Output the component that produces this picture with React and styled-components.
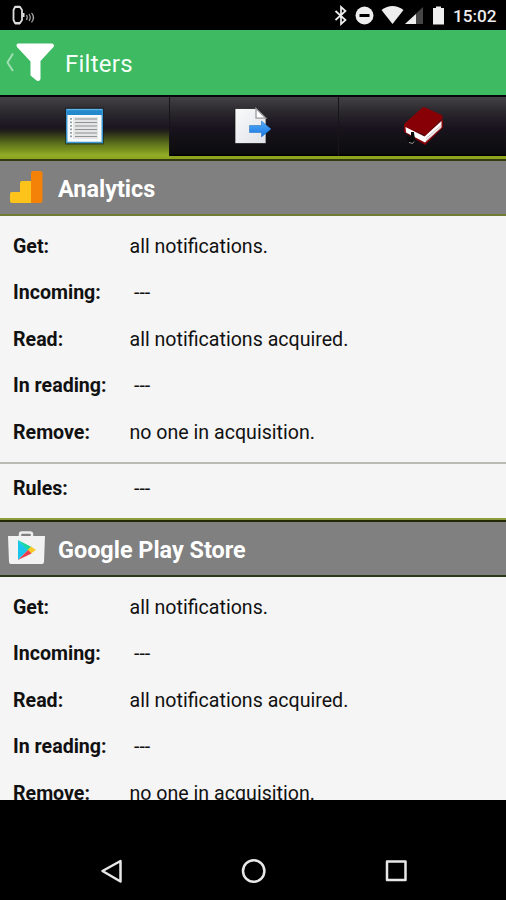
import React from 'react';
import styled, { createGlobalStyle } from 'styled-components';

const GlobalStyle = createGlobalStyle`
  * { box-sizing: border-box; }
  body { margin: 0; background: #000; font-family: Roboto, "Noto Sans", sans-serif; }
  svg { display: block; flex: none; }
`;

const Screen = styled.div`
  width: 506px;
  height: 900px;
  display: flex;
  flex-direction: column;
  overflow: hidden;
  background: #000;
`;

const StatusBar = styled.header`
  height: 30px;
  flex: none;
  display: flex;
  justify-content: space-between;
  color: #eee;
`;

const StatusRight = styled.div`
  display: flex;
  padding-right: 9px;
`;

const Clock = styled.span`
  width: 44px;
  font-size: 17.2px;
  font-weight: 500;
  line-height: 32px;
  white-space: nowrap;
`;

const TitleBar = styled.div`
  height: 65px;
  flex: none;
  display: flex;
  align-items: center;
  background: #3dba62;
  color: #f4fff7;
`;

const Title = styled.h1`
  margin: 0;
  padding-top: 3px;
  font-size: 24px;
  font-weight: 400;
  line-height: 28px;
  letter-spacing: 0.25px;
`;

const Tabs = styled.nav`
  height: 66px;
  flex: none;
  display: grid;
  grid-template-columns: 169px 169px 168px;
  padding-top: 2px;
  border-bottom: 2px solid #343c10;
  background: linear-gradient(#05070a 2px, transparent 2px), #8da51f;
`;

const Tab = styled.button`
  height: ${(p) => (p.$active ? 62 : 59)}px;
  padding: 0;
  border: 0;
  border-left: ${(p) => (p.$active ? 0 : 1)}px solid #17141a;
  display: flex;
  justify-content: center;
  background: ${(p) =>
    p.$active
      ? 'linear-gradient(#454247 0%, #2b282e 25%, #1b151f 50%, #232417 56%, #5c701b 75%, #91ad24 94%, #8ba322 100%)'
      : 'linear-gradient(#434145 0%, #29262c 27%, #19131d 52%, #121014 75%, #0c0b0d 97%, #000 98%)'};
`;

const Content = styled.main`
  height: 639px;
  flex: none;
  overflow: hidden;
  background: #f5f5f5;
  color: #111;
`;

const SectionHeader = styled.div`
  height: ${(p) => (p.$first ? 55 : 57)}px;
  display: flex;
  align-items: center;
  background: #808080;
  border-top: ${(p) => (p.$first ? 0 : 2)}px solid #202804;
  border-bottom: 2px solid ${(p) => (p.$first ? '#6f7d34' : '#29391c')};
`;

const SectionTitle = styled.h2`
  margin: 0;
  padding-top: 3px;
  font-size: 23.4px;
  line-height: 30px;
  font-weight: 700;
  color: #fff;
`;

const Fields = styled.dl`
  margin: 0;
  padding: 7.4px 0 6.6px;
  border-bottom: 2px solid #b9bab2;
`;

const Rules = styled.dl`
  margin: 0;
  height: 56px;
  padding-top: 1px;
  border-bottom: 2px solid #8d9b3f;
`;

const Field = styled.div`
  height: 46.4px;
  display: grid;
  grid-template-columns: 116.5px 1fr;
  align-items: center;
  padding-left: 13px;
  font-size: 19.6px;
  line-height: 24px;
`;

const Label = styled.dt`
  padding-top: 1px;
  font-weight: 700;
`;

const Value = styled.dd`
  margin: 0;
  padding-top: 1px;
  padding-left: ${(p) => (p.$empty ? 4.5 : 0)}px;
`;

const NavBar = styled.nav`
  height: 100px;
  flex: none;
  display: flex;
  justify-content: space-between;
  padding: 56px 98px 0 99px;
`;

const NavButton = styled.button`
  padding: 0;
  border: 0;
  background: transparent;
  height: 30px;
`;

const WatchIcon = () => (
  <svg width="40" height="30" viewBox="0 0 40 30" fill="none" stroke="#ddd">
    <path d="M15 7h5l2 3v10l-2 3h-5l-1.500-3V10z" strokeWidth="1.8" />
    <path d="M15 6.700h5M15 23.700h5" strokeWidth="1.8" />
    <path d="M23.500 13v4" strokeWidth="2" />
    <path d="M26.500 15q1.500 2 0 5M29 14q2.500 3.500 0 7M31.500 12.800q4 4.500 0 9.500" stroke="#aaa" strokeWidth="1.2" />
  </svg>
);

const StatusIcons = () => (
  <svg width="123" height="30" viewBox="330 0 123 30" fill="#eee">
    <path d="M335.5 11l10 9-4.5 4V7l4.5 4-10 9" fill="none" stroke="#eee" strokeWidth="1.7" />
    <circle cx="364.5" cy="15.5" r="9" />
    <path d="M359.5 14h10v3h-10z" fill="#000" />
    <path d="M381.5 10q11-8 22 0l-11 14z" />
    <path d="M423 7v17h-18z" fill="#454545" />
    <path d="M416 14v10h-11z" />
    <path d="M433 8h3V6.500h5V8h3v16.500h-11z" />
  </svg>
);

const FilterIcon = () => (
  <svg width="65" height="65" viewBox="0 30 65 65">
    <path d="M13 53.500L7.500 62.500 13 71" fill="none" stroke="#a0dfb1" strokeWidth="2" />
    <path d="M18 43.500h34q3 1 1.500 3.500L40.500 61v18q-1 3-4 1.500l-6-5V61.500L17 47q-1.500-2.500 1-3.500z" fill="#fff" />
  </svg>
);

const ListIcon = () => (
  <svg width="170" height="59" viewBox="0 97 170 59">
    <rect x="65" y="107.500" width="39" height="37" rx="1" fill="#111" opacity=".5" />
    <rect x="66.700" y="109.500" width="35.600" height="33" fill="#f8fafb" stroke="#3795cf" strokeWidth="1.500" />
    <path d="M67 110h35v5H67z" fill="#2489cc" />
    <path d="M67 109.700h35" stroke="#65bce9" />
    <path d="M73 117h25v22H73z" fill="#e4e5e5" />
    <path d="M75 119h22M75 122.500h22M75 126h22M75 129.500h22M75 133h22M75 136.500h22" stroke="#909294" strokeWidth="1.200" />
    <path d="M71 118v21" stroke="#8e999d" strokeWidth="1.800" strokeDasharray="1.800 1.700" />
  </svg>
);

const ExportIcon = () => (
  <svg width="168" height="59" viewBox="170.500 97 168 59">
    <defs>
      <linearGradient id="page" x2="1" y2="1">
        <stop stopColor="#fafafa" />
        <stop offset="1" stopColor="#dfe2e8" />
      </linearGradient>
      <linearGradient id="arrow" x2="0" y2="1">
        <stop stopColor="#55acf4" />
        <stop offset="1" stopColor="#1575e5" />
      </linearGradient>
    </defs>
    <path d="M235.500 108.500H257l9.500 10v25h-31z" fill="url(#page)" stroke="#111" strokeWidth=".7" />
    <path d="M256.500 108.500v9.700h9.800z" fill="#fff" stroke="#999" strokeWidth="1.300" />
    <path d="M250 125.500h12V121l9.500 8-9.500 8v-4.500h-12z" fill="url(#arrow)" stroke="#1869bd" strokeWidth=".5" />
  </svg>
);

const BookIcon = () => (
  <svg width="167" height="59" viewBox="339 97 167 59">
    <path d="M404 124l20 12 19-17v8.500L425 145l-21-13z" fill="#850007" />
    <path d="M405.500 127l19 9.500 17-15.500v6.500L425 142.500l-19-10z" fill="#fff" />
    <path d="M426 138.500l15-13M426 141l15-13.500" stroke="#b5a5a5" strokeWidth=".8" />
    <path d="M422.500 107.500q1.500-.6 4 .5l16 7.500v3L425 135.500l-20.500-10v-2z" fill="#870006" />
    <path d="M412 133v6l-4-1 3 5 3-4-1-6z" fill="#080808" stroke="#080808" strokeWidth="2" />
    <path d="M409 142.500l3.500 1 1.500-2" fill="none" stroke="#999" strokeWidth="1" />
  </svg>
);

const AnalyticsIcon = () => (
  <svg width="58" height="53" viewBox="0 161 58 53">
    <path d="M12 192h8v-9q0-2 2-2h9v22H12q-2 0-2-2v-7q0-2 2-2z" fill="#fdc31a" />
    <path d="M33 171h7q2.500 0 2.500 2.500v27q0 2.500-2.500 2.500h-9v-30q0-2 2-2z" fill="#f58208" />
  </svg>
);

const PlayIcon = () => (
  <svg width="58" height="53" viewBox="0 522 58 53">
    <path d="M20 536v-1.500q0-2 2-2h8q2 0 2 2v1.500" fill="none" stroke="#eee" strokeWidth="2.500" />
    <path d="M8 536h37l-1 26q0 2-2 2H11q-2 0-2-2z" fill="#f2f2f2" />
    <path d="M18 540v20l10-10z" fill="#18c6ed" />
    <path d="M18 540l13.500 7-3.500 3.500z" fill="#16d69d" />
    <path d="M31 546.500l5 3.500-5 3.500-3.500-3.500z" fill="#fac927" />
    <path d="M18 560l10-10 3.500 3.500z" fill="#e83d4c" />
  </svg>
);

const ICONS = { analytics: AnalyticsIcon, play: PlayIcon };
const EMPTY = '---';

const fields = [
  ['Get:', 'all notifications.'],
  ['Incoming:', EMPTY],
  ['Read:', 'all notifications acquired.'],
  ['In reading:', EMPTY],
  ['Remove:', 'no one in acquisition.'],
];

function FieldRow({ label, value }) {
  return (
    <Field>
      <Label>{label}</Label>
      <Value $empty={value === EMPTY}>{value}</Value>
    </Field>
  );
}

function FilterSection({ icon, title, first, rules }) {
  const Icon = ICONS[icon];
  return (
    <section>
      <SectionHeader $first={first}>
        <Icon />
        <SectionTitle>{title}</SectionTitle>
      </SectionHeader>
      <Fields>
        {fields.map(([label, value]) => (
          <FieldRow key={label} label={label} value={value} />
        ))}
      </Fields>
      {rules && (
        <Rules>
          <FieldRow label="Rules:" value={rules} />
        </Rules>
      )}
    </section>
  );
}

export default function App() {
  return (
    <>
      <GlobalStyle />
      <Screen>
        <StatusBar>
          <WatchIcon />
          <StatusRight>
            <StatusIcons />
            <Clock>15:02</Clock>
          </StatusRight>
        </StatusBar>
        <TitleBar>
          <FilterIcon />
          <Title>Filters</Title>
        </TitleBar>
        <Tabs>
          <Tab $active aria-label="List"><ListIcon /></Tab>
          <Tab aria-label="Export"><ExportIcon /></Tab>
          <Tab aria-label="Guide"><BookIcon /></Tab>
        </Tabs>
        <Content>
          <FilterSection icon="analytics" title="Analytics" rules={EMPTY} first />
          <FilterSection icon="play" title="Google Play Store" />
        </Content>
        <NavBar>
          <NavButton aria-label="Back">
            <svg width="26" height="30" viewBox="99 856 26 30" fill="none" stroke="#e8e8e8" strokeWidth="2.500" strokeLinejoin="round">
              <path d="M120.500 861v20.500L102.500 871z" />
            </svg>
          </NavButton>
          <NavButton aria-label="Home">
            <svg width="26" height="30" viewBox="240.500 856 26 30" fill="none" stroke="#e8e8e8" strokeWidth="2.500">
              <circle cx="253.200" cy="871" r="10.700" />
            </svg>
          </NavButton>
          <NavButton aria-label="Recent apps">
            <svg width="26" height="30" viewBox="382 856 26 30" fill="none" stroke="#e8e8e8" strokeWidth="2.500" strokeLinejoin="round">
              <rect x="387" y="861.500" width="18.500" height="18.500" />
            </svg>
          </NavButton>
        </NavBar>
      </Screen>
    </>
  );
}
